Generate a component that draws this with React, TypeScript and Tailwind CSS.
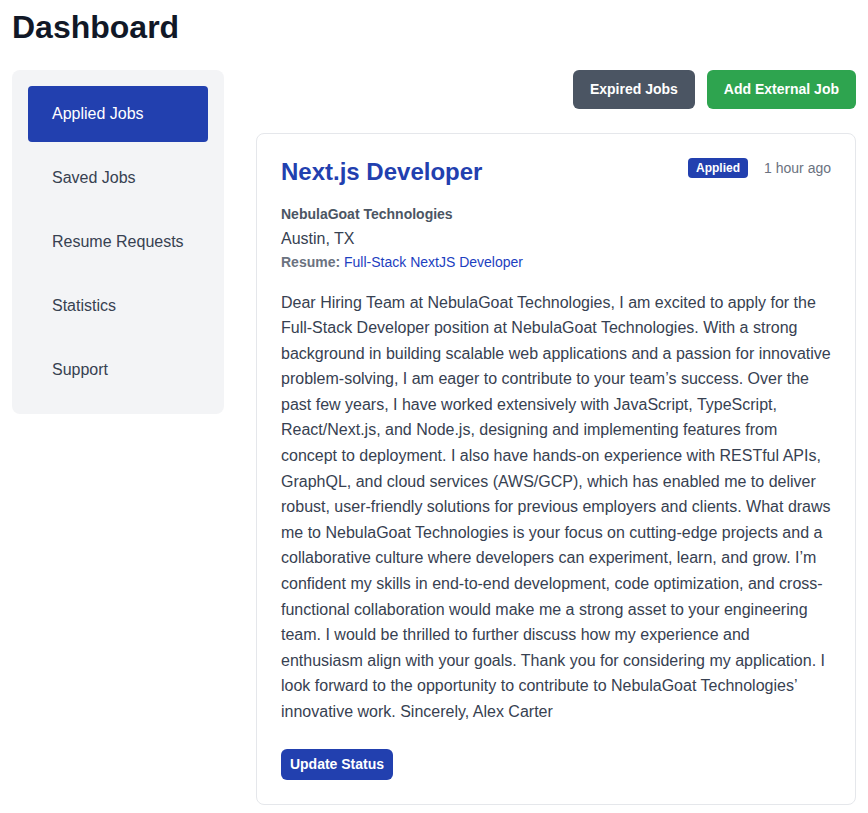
const links = ["Applied Jobs", "Saved Jobs", "Resume Requests", "Statistics", "Support"];

const letter =
  "Dear Hiring Team at NebulaGoat Technologies, I am excited to apply for the Full-Stack Developer position at NebulaGoat Technologies. With a strong background in building scalable web applications and a passion for innovative problem-solving, I am eager to contribute to your team’s success. Over the past few years, I have worked extensively with JavaScript, TypeScript, React/Next.js, and Node.js, designing and implementing features from concept to deployment. I also have hands-on experience with RESTful APIs, GraphQL, and cloud services (AWS/GCP), which has enabled me to deliver robust, user-friendly solutions for previous employers and clients. What draws me to NebulaGoat Technologies is your focus on cutting-edge projects and a collaborative culture where developers can experiment, learn, and grow. I’m confident my skills in end-to-end development, code optimization, and cross-functional collaboration would make me a strong asset to your engineering team. I would be thrilled to further discuss how my experience and enthusiasm align with your goals. Thank you for considering my application. I look forward to the opportunity to contribute to NebulaGoat Technologies’ innovative work. Sincerely, Alex Carter";

export default function App() {
  return (
    <div className="min-h-[813px] bg-white px-3 pt-2 font-['Liberation_Sans',Arial,sans-serif] text-[#111827]">
      <h1 className="mb-6 text-[32px] leading-[38px] font-bold">Dashboard</h1>
      <div className="flex gap-8">
        <aside className="h-[344px] w-[212px] shrink-0 rounded-lg bg-[#f3f4f6] p-4">
          <nav className="flex flex-col gap-2">
            {links.map((link, i) => (
              <a
                key={link}
                className={
                  i === 0
                    ? "flex h-14 items-center rounded bg-[#2240af] px-6 text-white"
                    : "flex h-14 items-center rounded px-6 text-[#374151]"
                }
              >
                {link}
              </a>
            ))}
          </nav>
        </aside>

        <main className="flex-1">
          <div className="mb-6 flex justify-end gap-3">
            <button className="h-[39px] rounded-md bg-[#4b5563] px-[17px] pb-px text-sm font-bold text-white">
              Expired Jobs
            </button>
            <button className="h-[39px] rounded-md bg-[#2ea44f] px-[17px] pb-px text-sm font-bold text-white">
              Add External Job
            </button>
          </div>

          <div className="rounded-lg border border-[#e5e7eb] bg-white p-6">
            <div className="flex items-start justify-between">
              <h2 className="text-2xl leading-[27px] font-bold text-[#2240af]">Next.js Developer</h2>
              <div className="flex items-center gap-4">
                <span className="rounded bg-[#2240af] px-2 py-0.5 text-xs font-bold text-white">
                  Applied
                </span>
                <span className="text-sm text-[#6b7280]">1 hour ago</span>
              </div>
            </div>
            <p className="mt-[19px] text-sm font-bold text-[#4b5563]">NebulaGoat Technologies</p>
            <p className="mt-[3px] text-[#374151]">Austin, TX</p>
            <p className="mt-px text-sm text-[#6b7280]">
              <span className="font-bold">Resume: </span>
              <a className="text-[#1d40c0]">Full-Stack NextJS Developer</a>
            </p>
            <p className="mt-[17.5px] text-base leading-[25.6px] text-[#374151]">{letter}</p>
            <button className="mt-[24.5px] block h-[31px] w-28 rounded-md bg-[#2240af] pb-px text-sm font-bold text-white">
              Update Status
            </button>
          </div>
        </main>
      </div>
    </div>
  );
}
